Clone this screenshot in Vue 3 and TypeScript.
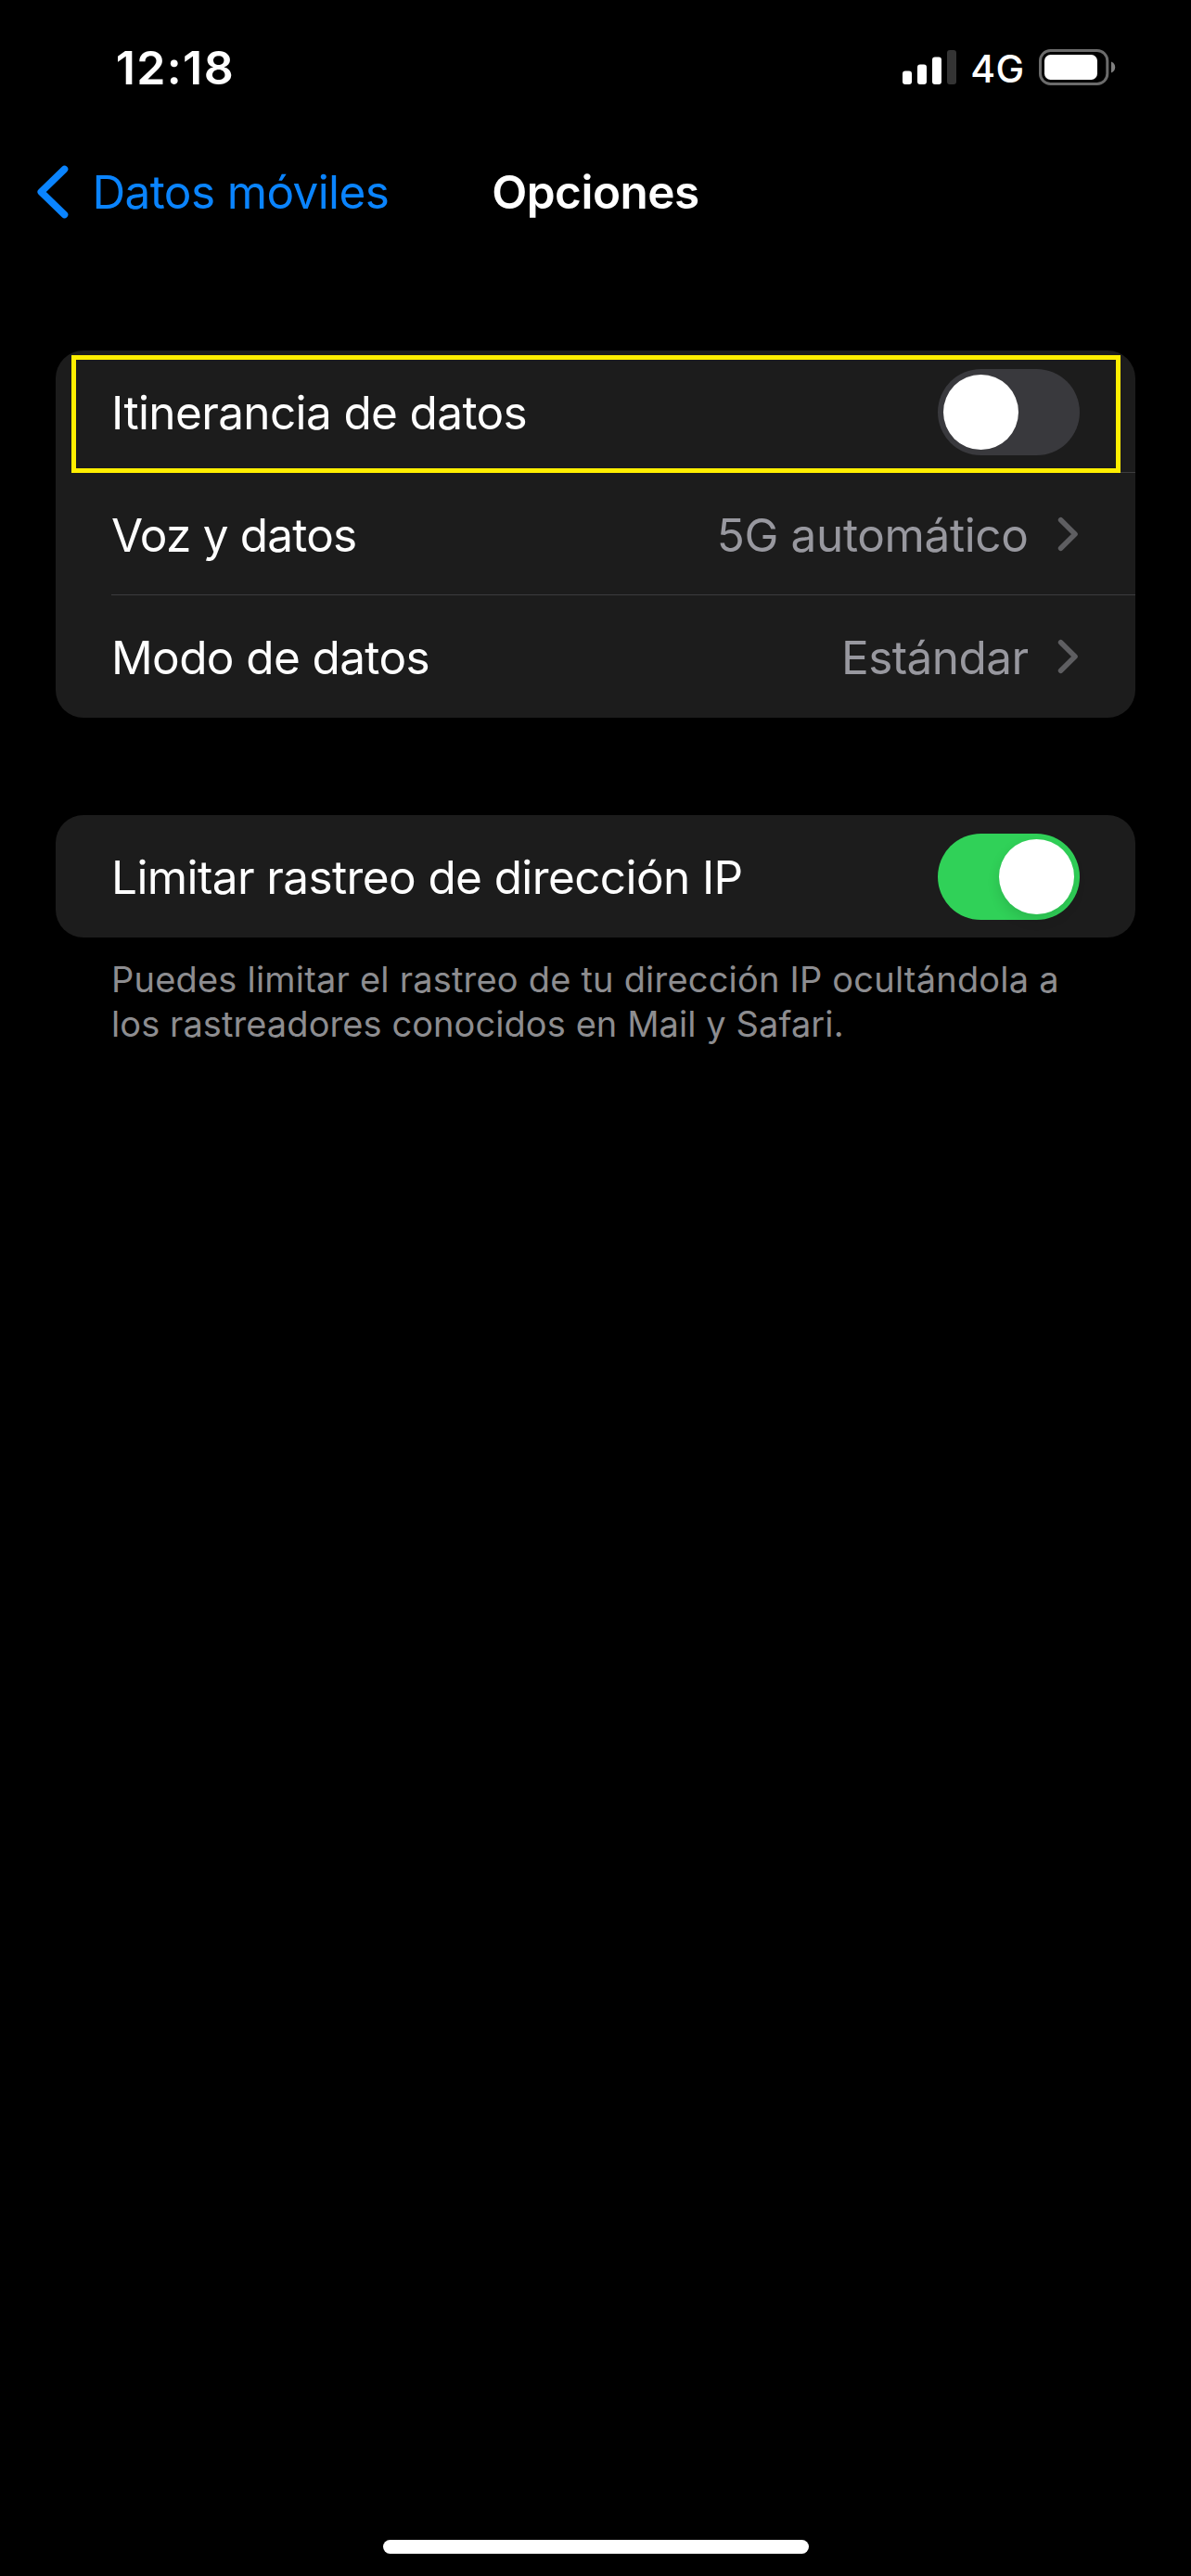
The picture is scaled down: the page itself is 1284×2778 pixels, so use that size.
<script setup lang="ts">
interface Row {
  label: string
  tracking: number
  value?: string
  valueTracking?: number
  on?: boolean
  highlighted?: boolean
}

interface Group {
  rows: Row[]
  footer?: { text: string; tracking: number }[]
}

const groups: Group[] = [
  {
    rows: [
      { label: 'Itinerancia de datos', tracking: -0.63, on: false, highlighted: true },
      { label: 'Voz y datos', tracking: -0.8, value: '5G automático', valueTracking: -0.385 },
      { label: 'Modo de datos', tracking: -0.62, value: 'Estándar', valueTracking: -0.58 },
    ],
  },
  {
    rows: [{ label: 'Limitar rastreo de dirección IP', tracking: -0.61, on: true }],
    footer: [
      { text: 'Puedes limitar el rastreo de tu dirección IP ocultándola a', tracking: 0.205 },
      { text: 'los rastreadores conocidos en Mail y Safari.', tracking: 0.08 },
    ],
  },
]
</script>

<template>
  <div class="screen">
    <header class="status">
      <span class="time">12:18</span>
      <div class="indicators">
        <svg class="signal" width="58" height="38" viewBox="0 0 58 38">
          <rect x="0" y="23.5" width="10" height="14.5" rx="3" fill="#fff" />
          <rect x="16" y="16.5" width="10" height="21.5" rx="3" fill="#fff" />
          <rect x="32" y="8.5" width="10" height="29.5" rx="3" fill="#fff" />
          <rect x="48" y="1" width="10" height="37" rx="3" fill="#343434" />
        </svg>
        <span class="network">4G</span>
        <svg class="battery" width="83" height="39" viewBox="0 0 83 39">
          <rect x="1.5" y="1.5" width="72.3" height="36" rx="11" fill="none" stroke="#6b6b6b" stroke-width="3" />
          <rect x="6" y="6" width="57" height="27" rx="6.5" fill="#fff" />
          <path d="M78 13.5c2.600 1 4.200 3.200 4.200 6s-1.600 5-4.200 6z" fill="#808080" />
        </svg>
      </div>
    </header>

    <nav class="navbar">
      <button class="back" type="button">
        <svg width="36" height="60" viewBox="0 0 36 60">
          <path d="M30.500 5.500 5.300 30l25.200 24.500" fill="none" stroke="#0a84ff" stroke-width="7.600" stroke-linecap="round" stroke-linejoin="round" />
        </svg>
        <span>Datos móviles</span>
      </button>
      <h1 class="title">Opciones</h1>
    </nav>

    <main class="content">
      <section v-for="(group, g) in groups" :key="g" class="group">
        <div class="card">
          <div v-for="row in group.rows" :key="row.label" class="row">
            <span class="label" :style="{ letterSpacing: row.tracking + 'px' }">{{ row.label }}</span>
            <template v-if="row.value">
              <span class="value" :style="{ letterSpacing: row.valueTracking + 'px' }">{{ row.value }}</span>
              <svg class="chevron" width="24" height="38" viewBox="0 0 24 38">
                <path d="M3.600 3.800 19 19 3.600 34.200" fill="none" stroke="#5e5e61" stroke-width="5.600" stroke-linecap="round" stroke-linejoin="round" />
              </svg>
            </template>
            <span v-else class="switch" :class="{ on: row.on }"><span class="knob" /></span>
            <span v-if="row.highlighted" class="highlight" />
          </div>
        </div>
        <p v-if="group.footer" class="footer">
          <span v-for="line in group.footer" :key="line.text" :style="{ letterSpacing: line.tracking + 'px' }">{{ line.text }}</span>
        </p>
      </section>
    </main>

    <div class="home" />
  </div>
</template>

<style>
html,
body {
  margin: 0;
  background: #000;
}
</style>

<style scoped>
.screen {
  display: flex;
  flex-direction: column;
  box-sizing: border-box;
  width: 1284px;
  height: 2778px;
  padding-bottom: 24px;
  overflow: hidden;
  background: #000;
  color: #fff;
  font-family: Inter, Roboto, sans-serif;
  font-size: 49.5px;
  line-height: 60px;
}

.status {
  display: flex;
  justify-content: space-between;
  box-sizing: border-box;
  height: 141px;
  padding: 43px 81px 0 124.700px;
}

.time {
  font-size: 50px;
  font-weight: 600;
  letter-spacing: 1.4px;
}

.indicators {
  display: flex;
  align-items: flex-start;
}

.signal {
  margin-top: 10px;
}

.network {
  margin: 1px 15.500px 0 15px;
  font-size: 41px;
  font-weight: 500;
  letter-spacing: 0.4px;
}

.battery {
  margin-top: 10px;
}

.navbar {
  display: grid;
  grid-template-columns: 1fr auto 1fr;
  align-items: center;
  height: 132px;
}

.back {
  display: flex;
  align-items: center;
  gap: 25px;
  margin: 0;
  padding: 0 0 0 38.500px;
  border: 0;
  background: none;
  color: #0a84ff;
  font: inherit;
  letter-spacing: -0.63px;
  white-space: nowrap;
}

.title {
  margin: 0;
  font-size: 49.5px;
  font-weight: 600;
  letter-spacing: -0.5px;
}

.content {
  display: flex;
  flex: 1;
  flex-direction: column;
  gap: 105px;
  padding: 105px 60px 0;
}

.card {
  overflow: hidden;
  border-radius: 30px;
  background: #1c1c1c;
}

.row {
  position: relative;
  display: flex;
  align-items: center;
  box-sizing: border-box;
  height: 132px;
  padding: 0 60px;
}

.row + .row::before {
  content: '';
  position: absolute;
  top: -1px;
  right: 0;
  left: 60px;
  height: 1px;
  background: #3c3c3e;
}

.label {
  flex: 1;
  padding-top: 2px;
}

.value {
  padding-top: 2px;
  color: #98989f;
}

.chevron {
  margin-left: 31.500px;
}

.switch {
  box-sizing: border-box;
  width: 153px;
  height: 93px;
  margin-top: 1px;
  padding: 6px;
  border-radius: 47px;
  background: #39393d;
}

.knob {
  display: block;
  width: 81px;
  height: 81px;
  border-radius: 50%;
  background: #fff;
}

.switch.on {
  background: #30d158;
}

.switch.on .knob {
  margin-left: auto;
  box-shadow: 0 6px 14px rgba(0, 0, 0, 0.12);
}

.highlight {
  position: absolute;
  z-index: 1;
  top: 5px;
  right: 16px;
  bottom: 0;
  left: 17px;
  border: 5px solid #ffee00;
}

.footer {
  margin: 21px 0 0;
  padding: 0 60px;
  color: #8d8d90;
  font-size: 38px;
  line-height: 48px;
}

.footer span {
  display: block;
  white-space: nowrap;
}

.home {
  align-self: center;
  width: 459px;
  height: 15px;
  border-radius: 8px;
  background: #fff;
}
</style>
